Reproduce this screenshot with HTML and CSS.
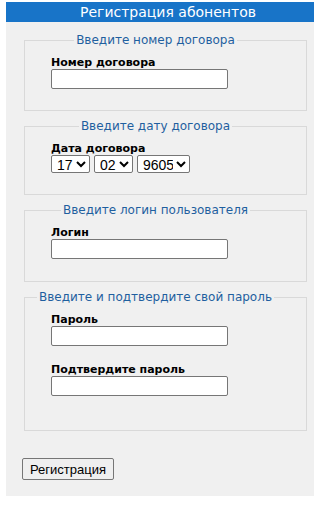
FILE: index.html
```html
<!DOCTYPE html>
<html>
<head>
<meta charset="UTF-8" />
<title>Регистрация абонентов</title>
<link rel="stylesheet" href="styles.css">
</head>
<body>
<div class="page">
    <div class="title">Регистрация абонентов</div>
    <form class="reg">
        <fieldset class="f1">
            <legend>Введите номер договора</legend>
            <div class="fields">
                <label>Номер договора</label>
                <input type="text" />
            </div>
        </fieldset>
        <fieldset class="f2">
            <legend>Введите дату договора</legend>
            <div class="fields">
                <label>Дата договора</label>
                <div class="date">
                    <select class="d"><option>17</option></select>
                    <select class="m"><option>02</option></select>
                    <select class="y"><option>9605</option></select>
                </div>
            </div>
        </fieldset>
        <fieldset class="f3">
            <legend>Введите логин пользователя</legend>
            <div class="fields">
                <label>Логин</label>
                <input type="text" />
            </div>
        </fieldset>
        <fieldset class="f4">
            <legend>Введите и подтвердите свой пароль</legend>
            <div class="fields">
                <label>Пароль</label>
                <input type="password" />
                <label class="second">Подтвердите пароль</label>
                <input type="password" />
            </div>
        </fieldset>
        <button type="button" class="submit">Регистрация</button>
    </form>
</div>
</body>
</html>
```

FILE: styles.css
```css
html, body{
    margin:0px;
    padding:0px;
    background:#fff;
}
.page{
    margin:2px 0 0 6px;
    width:308px;
    background:#f0f0f0;
    padding-bottom:16px;
    font-family:"DejaVu Sans", Verdana, sans-serif;
}
.title{
    background:#1874c8;
    color:#fff;
    height:20px;
    line-height:20px;
    font-size:14px;
    text-align:center;
    padding-left:16px;
}
.reg{
    padding-top:11px;
}
fieldset{
    margin:0 7px 8px 18px;
    width:283px;
    box-sizing:border-box;
    border:1px solid #d9d9d9;
    padding:0 26px 21px 6px;
}
legend{
    margin:0 auto;
    padding:0 2px;
    color:#1f5f9f;
    font-size:12px;
    line-height:14px;
    white-space:nowrap;
}
.fields{
    padding-left:20px;
}
label{
    display:block;
    font-size:11px;
    font-weight:bold;
    line-height:12px;
    margin-top:10px;
    color:#000;
}
input{
    display:block;
    width:177px;
    height:20px;
    box-sizing:border-box;
    margin:0;
    border:1px solid #767676;
    border-radius:2px;
    background:#fff;
}
.f3{
    padding-bottom:22px;
}
.f4{
    padding-bottom:34px;
}
.f4 label.second{
    margin-top:18px;
}
.date{
    display:flex;
    gap:4px;
}
select{
    height:18px;
    font-family:"Liberation Sans", Arial, sans-serif;
    font-size:14px;
    border:1px solid #767676;
    border-radius:2px;
    background:#fff;
    padding:0 0 0 1px;
    margin:0;
}
select.d, select.m{
    width:39px;
}
select.y{
    width:53px;
}
.submit{
    margin:19px 0 0 16px;
    height:22px;
    padding:0 7px;
    font-family:"Liberation Sans", Arial, sans-serif;
    font-size:13px;
    background:#efefef;
    border:1px solid #767676;
    border-radius:2px;
}
```
